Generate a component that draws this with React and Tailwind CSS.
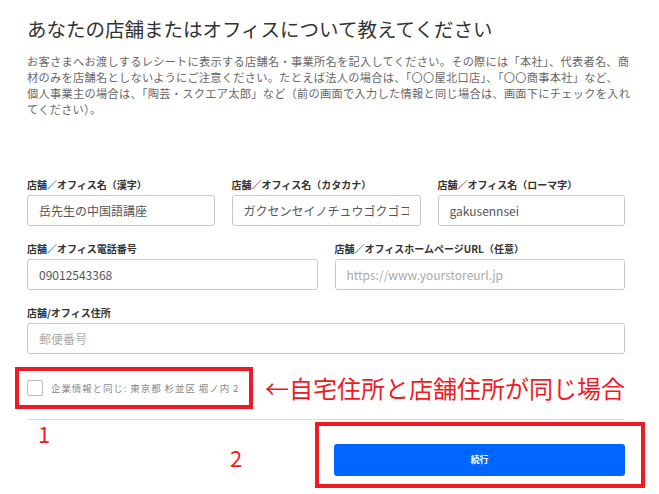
import React from "react";

const FONT = { fontFamily: '"Noto Sans CJK JP", "Noto Sans", sans-serif' };

function Field({ label, value, placeholder, className = "" }) {
  return (
    <div className={"flex flex-col " + className}>
      <div className="text-[10px] leading-[14px] font-bold text-[#333] mb-[3px] whitespace-nowrap">{label}</div>
      <div className="h-[31px] border border-[#c8c8c8] rounded-[3px] flex items-center px-[11px] overflow-hidden">
        {value ? (
          <span className="text-[12px] text-[#555] whitespace-nowrap overflow-hidden">{value}</span>
        ) : (
          <span className="text-[12px] text-[#aaa] whitespace-nowrap">{placeholder}</span>
        )}
      </div>
    </div>
  );
}

export default function App() {
  return (
    <div style={FONT} className="w-[659px] h-[494px] bg-white relative overflow-hidden">
      <div className="pl-[27px] w-[625px]">
        <h1 className="pt-[15px] text-[19.5px] leading-[28px] text-[#333] font-normal">
          あなたの店舗またはオフィスについて教えてください
        </h1>
        <p className="mt-[10px] text-[11.2px] leading-[16px] tracking-[0.3px] text-[#666] whitespace-nowrap">
          お客さまへお渡しするレシートに表示する店舗名・事業所名を記入してください。その際には「本社」、代表者名、商<br />
          材のみを店舗名としないようにご注意ください。たとえば法人の場合は、「〇〇屋北口店」、「〇〇商事本社」など、<br />
          個人事業主の場合は、「陶芸・スクエア太郎」など（前の画面で入力した情報と同じ場合は、画面下にチェックを入れ<br />
          てください）。
        </p>

        <div className="mt-[61px] flex flex-col gap-[16px]">
          <div className="flex gap-[17px]">
            <Field className="w-[189px]" label="店舗／オフィス名（漢字）" value="岳先生の中国語講座" />
            <Field className="w-[189px]" label="店舗／オフィス名（カタカナ）" value="ガクセンセイノチュウゴクゴコウザ" />
            <Field className="w-[189px]" label="店舗／オフィス名（ローマ字）" value="gakusennsei" />
          </div>
          <div className="flex gap-[17px]">
            <Field className="w-[291px]" label="店舗／オフィス電話番号" value="09012543368" />
            <Field className="w-[291px]" label="店舗／オフィスホームページURL（任意）" placeholder="https://www.yourstoreurl.jp" />
          </div>
          <Field className="w-[598px]" label="店舗/オフィス住所" placeholder="郵便番号" />
        </div>

        <div className="mt-[13px] h-[42px] w-[598px] flex items-center relative">
          <div className="absolute left-[-12px] top-0 w-[238px] h-[42px] border-[4px] border-[#ed1c24]" />
          <div className="w-[16px] h-[16px] border border-[#bbb] rounded-[2px] bg-white shrink-0" />
          <span className="ml-[8px] text-[9.5px] tracking-[0.9px] text-[#888] whitespace-nowrap">企業情報と同じ: 東京都 杉並区 堀ノ内 2</span>
          <span className="ml-auto text-[24px] leading-[30px] text-[#ed1c24] whitespace-nowrap">←自宅住所と店舗住所が同じ場合</span>
        </div>

        <div className="mt-[10px] h-px w-[598px] bg-[#dcdcdc]" />

        <div className="flex justify-end mt-[24px] w-[598px]">
          <button className="w-[291px] h-[32px] rounded-[3px] bg-[#0066ff] text-white text-[9px] font-bold">
            続行
          </button>
        </div>
      </div>

      <span className="absolute left-[38px] top-[420px] text-[22px] leading-[26px] text-[#ed1c24]">1</span>
      <span className="absolute left-[230px] top-[444px] text-[22px] leading-[26px] text-[#ed1c24]">2</span>
      <div className="absolute left-[315px] top-[422px] w-[330px] h-[66px] border-[4px] border-[#ed1c24]" />
    </div>
  );
}
